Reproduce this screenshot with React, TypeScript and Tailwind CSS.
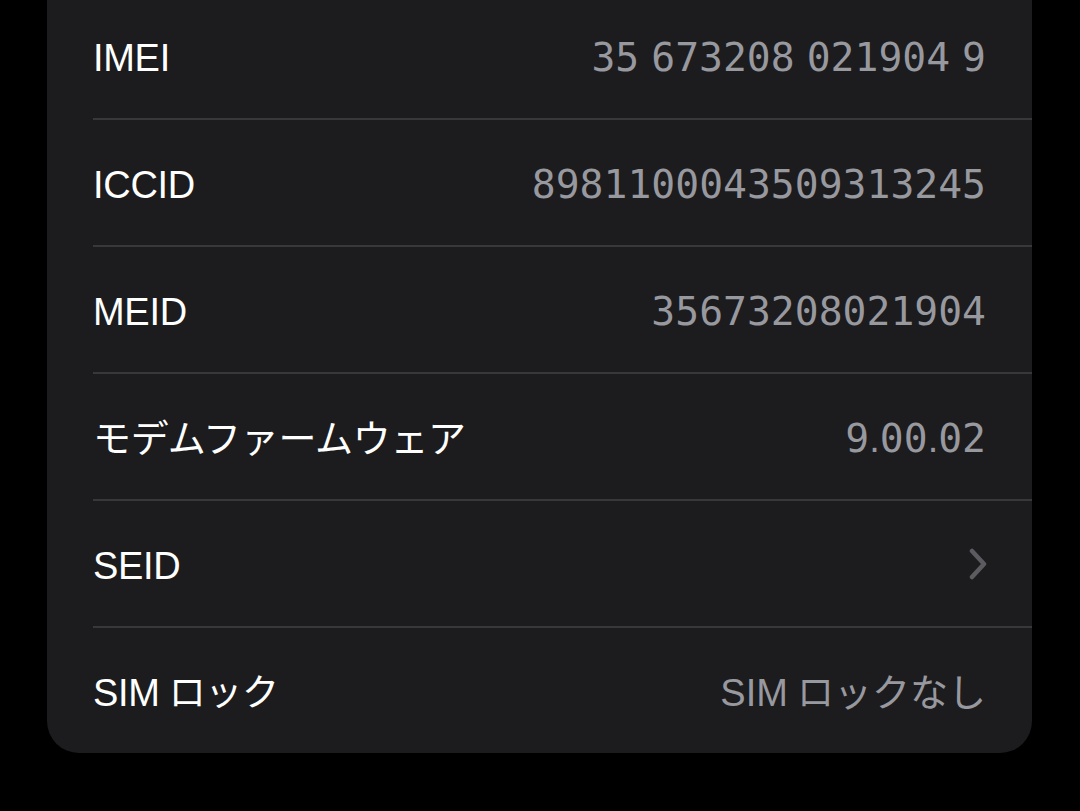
import React from "react";

interface Row {
  label: string
  value?: string
  chevron?: boolean
}

const rows: Row[] = [
  { label: "IMEI", value: "35 673208 021904 9" },
  { label: "ICCID", value: "8981100043509313245" },
  { label: "MEID", value: "35673208021904" },
  { label: "モデムファームウェア", value: "9.00.02" },
  { label: "SEID", chevron: true },
  { label: "SIMロック", value: "SIMロックなし" },
];

// digits are tabular in the original, the rest is proportional
function Value({ text }: { text: string }) {
  return (
    <span className="flex items-baseline text-[#98989f]">
      {text.split("").map((ch, i) =>
        /\d/.test(ch) ? (
          <span key={i} className="font-['DejaVu_Sans_Mono',monospace] text-[39.7px]">
            {ch}
          </span>
        ) : ch === " " ? (
          <span key={i} className="w-[12px]" />
        ) : (
          <span key={i} className={ch === "ロ" ? "ml-[9px] font-['Liberation_Sans','Noto_Sans_CJK_JP',sans-serif] text-[37px]" : "font-['Liberation_Sans','Noto_Sans_CJK_JP',sans-serif] text-[38px]"}>
            {ch}
          </span>
        )
      )}
    </span>
  );
}

function Chevron() {
  return (
    <svg width="20" height="32" viewBox="0 0 20 32" fill="none" className="mr-[-2px] -mt-[4px]">
      <path d="M4 3 L16 16 L4 29" stroke="#5b5b60" strokeWidth="4.5" strokeLinecap="round" strokeLinejoin="round" />
    </svg>
  );
}

function Label({ text }: { text: string }) {
  const i = text.indexOf("ロ");
  const cls = "text-white text-[38px] tracking-[-0.3px] font-['Liberation_Sans','Noto_Sans_CJK_JP',sans-serif]";
  if (i > 0) {
    return (
      <span className={cls}>
        {text.slice(0, i)}
        <span className="ml-[9px] text-[37px]">{text.slice(i)}</span>
      </span>
    );
  }
  return <span className={cls}>{text}</span>;
}

export default function App() {
  return (
    <div className="min-h-[811px] w-full bg-black overflow-hidden">
      <div className="ml-[47px] mr-[48px] -mt-[7px] bg-[#1c1c1e] rounded-b-[32px]">
        {rows.map((row, i) => (
          <div
            key={row.label}
            className={
              i < rows.length - 1
                ? "ml-[46px] pr-[46px] pt-[5px] h-[127px] flex items-center justify-between border-b-2 border-[#38383a]"
                : "ml-[46px] pr-[46px] pt-[5px] h-[125px] flex items-center justify-between"
            }
          >
            <Label text={row.label} />
            {row.chevron ? <Chevron /> : <Value text={row.value ?? ""} />}
          </div>
        ))}
      </div>
    </div>
  );
}
